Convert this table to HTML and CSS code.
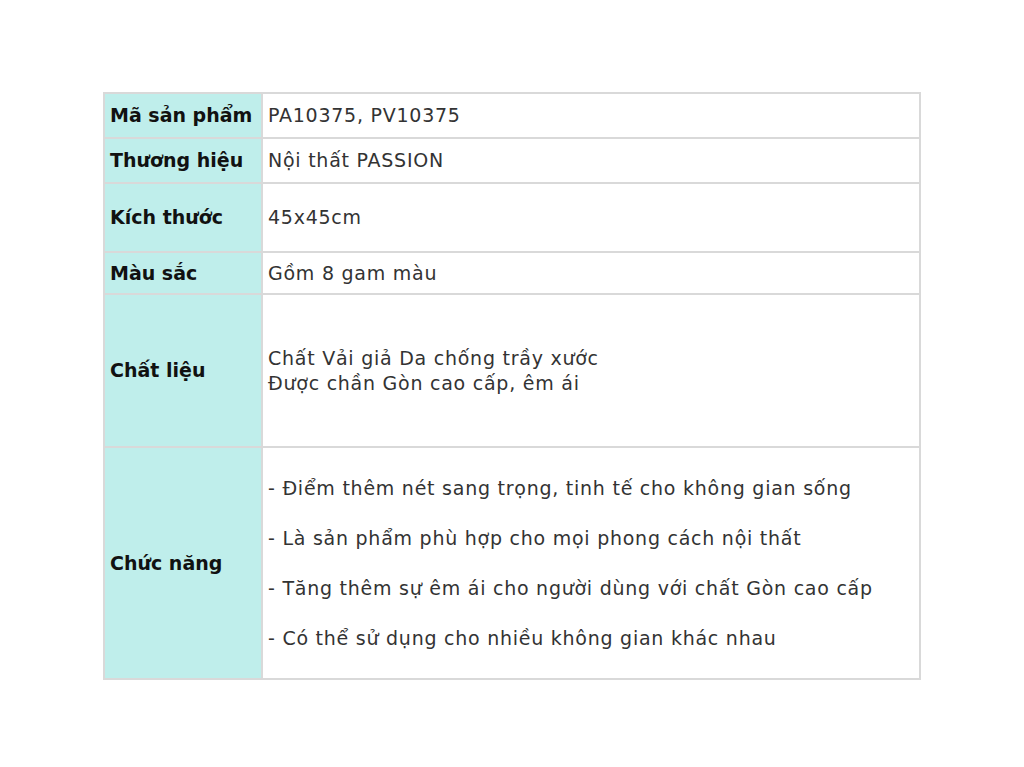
FILE: index.html
```html
<!DOCTYPE html>
<html lang="vi">
<head>
    <meta charset="UTF-8">
    <meta name="viewport" content="width=device-width, initial-scale=1.0">
    <title>Thông số sản phẩm</title>
    <link rel="stylesheet" href="styles.css">
</head>
<body>

<div class="spec-wrap">
    <table class="spec-table">
        <tr class="row-code">
            <th>Mã sản phẩm</th>
            <td>PA10375, PV10375</td>
        </tr>
        <tr class="row-brand">
            <th>Thương hiệu</th>
            <td>Nội thất PASSION</td>
        </tr>
        <tr class="row-size">
            <th>Kích thước</th>
            <td>45x45cm</td>
        </tr>
        <tr class="row-color">
            <th>Màu sắc</th>
            <td>Gồm 8 gam màu</td>
        </tr>
        <tr class="row-material">
            <th>Chất liệu</th>
            <td>Chất Vải giả Da chống trầy xước<br>Được chần Gòn cao cấp, êm ái</td>
        </tr>
        <tr class="row-feature">
            <th>Chức năng</th>
            <td>
                <p>- Điểm thêm nét sang trọng, tinh tế cho không gian sống</p>
                <p>- Là sản phẩm phù hợp cho mọi phong cách nội thất</p>
                <p>- Tăng thêm sự êm ái cho người dùng với chất Gòn cao cấp</p>
                <p>- Có thể sử dụng cho nhiều không gian khác nhau</p>
            </td>
        </tr>
    </table>
</div>

</body>
</html>
```

FILE: styles.css
```css
body {
    margin: 0;
    background-color: #ffffff;
    font-family: "DejaVu Sans", "Open Sans", sans-serif;
}

.spec-wrap {
    padding-top: 92px;
    display: flex;
    justify-content: center;
}

.spec-table {
    width: 818px;
    border-collapse: collapse;
    border: 2px solid #d2d2d2;
    font-size: 19px;
    line-height: 25px;
}

.spec-table th,
.spec-table td {
    border: 2px solid #d9d9d9;
    padding: 0 5px;
    vertical-align: middle;
    text-align: left;
}

.spec-table th {
    width: 146px;
    background-color: #bfeeeb;
    color: #111111;
    font-weight: 700;
}

.spec-table td {
    color: #333333;
    font-weight: 400;
    letter-spacing: 0.75px;
}

.spec-table td p {
    margin: 0 0 25px 0;
}

.spec-table td p:last-child {
    margin-bottom: 0;
}

.row-code { height: 45px; }
.row-brand { height: 45px; }
.row-size { height: 69px; }
.row-color { height: 42px; }
.row-material { height: 153px; }
.row-feature { height: 232px; }
```
